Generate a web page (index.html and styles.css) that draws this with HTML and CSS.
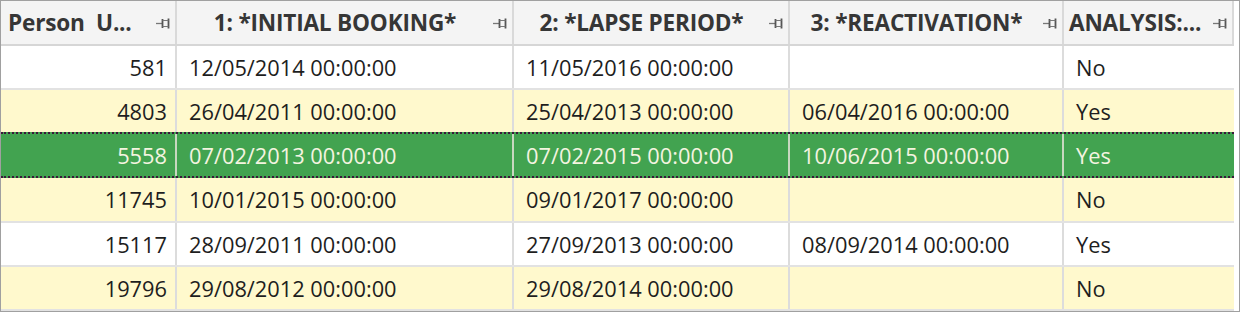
FILE: index.html
```html
<!DOCTYPE html>
<html>
<head>
<meta charset="utf-8">
<link rel="stylesheet" href="styles.css">
</head>
<body>
<div class="frame">
  <div class="grid">
    <div class="hrow">
      <div class="hcell left"><span class="hlabel">Person&nbsp; U...</span><svg class="pin" width="14" height="13" viewBox="0 0 14 13"><path d="M0 6.5H6" stroke="#777" stroke-width="1.3"/><path d="M6.5 2V11M12.5 1.5V11.5" stroke="#555" stroke-width="1.8"/><path d="M6.5 3.5H12.5M6.5 9.5H12.5" stroke="#777" stroke-width="1.2"/></svg></div>
      <div class="hcell"><span class="hlabel">1: *INITIAL BOOKING*</span><svg class="pin" width="14" height="13" viewBox="0 0 14 13"><path d="M0 6.5H6" stroke="#777" stroke-width="1.3"/><path d="M6.5 2V11M12.5 1.5V11.5" stroke="#555" stroke-width="1.8"/><path d="M6.5 3.5H12.5M6.5 9.5H12.5" stroke="#777" stroke-width="1.2"/></svg></div>
      <div class="hcell"><span class="hlabel">2: *LAPSE PERIOD*</span><svg class="pin" width="14" height="13" viewBox="0 0 14 13"><path d="M0 6.5H6" stroke="#777" stroke-width="1.3"/><path d="M6.5 2V11M12.5 1.5V11.5" stroke="#555" stroke-width="1.8"/><path d="M6.5 3.5H12.5M6.5 9.5H12.5" stroke="#777" stroke-width="1.2"/></svg></div>
      <div class="hcell"><span class="hlabel">3: *REACTIVATION*</span><svg class="pin" width="14" height="13" viewBox="0 0 14 13"><path d="M0 6.5H6" stroke="#777" stroke-width="1.3"/><path d="M6.5 2V11M12.5 1.5V11.5" stroke="#555" stroke-width="1.8"/><path d="M6.5 3.5H12.5M6.5 9.5H12.5" stroke="#777" stroke-width="1.2"/></svg></div>
      <div class="hcell left last"><span class="hlabel">ANALYSIS:...</span><svg class="pin" width="14" height="13" viewBox="0 0 14 13"><path d="M0 6.5H6" stroke="#777" stroke-width="1.3"/><path d="M6.5 2V11M12.5 1.5V11.5" stroke="#555" stroke-width="1.8"/><path d="M6.5 3.5H12.5M6.5 9.5H12.5" stroke="#777" stroke-width="1.2"/></svg></div>
    </div>
    <div class="row white">
      <div class="cell num">581</div><div class="cell">12/05/2014 00:00:00</div><div class="cell">11/05/2016 00:00:00</div><div class="cell"></div><div class="cell last">No</div>
    </div>
    <div class="row yellow">
      <div class="cell num">4803</div><div class="cell">26/04/2011 00:00:00</div><div class="cell">25/04/2013 00:00:00</div><div class="cell">06/04/2016 00:00:00</div><div class="cell last">Yes</div>
    </div>
    <div class="row selected">
      <div class="cell num">5558</div><div class="cell">07/02/2013 00:00:00</div><div class="cell">07/02/2015 00:00:00</div><div class="cell">10/06/2015 00:00:00</div><div class="cell last">Yes</div>
    </div>
    <div class="row yellow tall">
      <div class="cell num">11745</div><div class="cell">10/01/2015 00:00:00</div><div class="cell">09/01/2017 00:00:00</div><div class="cell"></div><div class="cell last">No</div>
    </div>
    <div class="row white">
      <div class="cell num">15117</div><div class="cell">28/09/2011 00:00:00</div><div class="cell">27/09/2013 00:00:00</div><div class="cell">08/09/2014 00:00:00</div><div class="cell last">Yes</div>
    </div>
    <div class="row yellow">
      <div class="cell num">19796</div><div class="cell">29/08/2012 00:00:00</div><div class="cell">29/08/2014 00:00:00</div><div class="cell"></div><div class="cell last">No</div>
    </div>
  </div>
</div>
</body>
</html>
```

FILE: styles.css
```css
html, body {
  margin: 0;
  padding: 0;
  background: #ffffff;
}
.frame {
  width: 1238px;
  height: 310px;
  border: 1px solid #a0a0a0;
  background: #ffffff;
  overflow: hidden;
  font-family: "Open Sans", "Noto Sans", sans-serif;
}
.grid {
  width: 1233px;
}
.hrow, .row {
  display: grid;
  grid-template-columns: 176px 337px 276px 274px 170px;
}
.hrow {
  height: 45px;
  background: #f4f4f4;
  border-bottom: 2px solid #d6d6d6;
  box-sizing: border-box;
}
.hcell {
  display: flex;
  align-items: center;
  justify-content: center;
  position: relative;
  padding: 0 26px 0 7px;
  border-right: 2px solid #d9d9d9;
  font-weight: 700;
  font-size: 22.6px;
  letter-spacing: -0.2px;
  color: #363636;
  white-space: nowrap;
}
.hcell.left {
  justify-content: flex-start;
}
.hcell.last {
  padding-left: 5px;
}
.pin {
  position: absolute;
  right: 5px;
  top: 16px;
}
.row {
  height: 44px;
  box-sizing: border-box;
  border-bottom: 2px solid #e2e2e2;
  font-size: 21.8px;
  color: #1e1e1e;
}
.row.tall { height: 45px; }
.row.white { background: #ffffff; }
.row.yellow { background: #fff9cd; }
.row.selected {
  background: #42a350;
  color: #f4f4e0;
  border-top: 2px dotted #3a1a3a;
  border-bottom: 2px dotted #3a1a3a;
  margin-top: -2px;
  height: 46px;
}
.cell {
  display: flex;
  align-items: center;
  padding: 0 12px;
  border-right: 2px solid #dcdcdc;
  white-space: nowrap;
}
.row.selected .cell {
  border-right-color: #c8d8c0;
}
.cell.num {
  justify-content: flex-end;
  padding-right: 8px;
}
.cell.last {
  border-right: none;
}
```
